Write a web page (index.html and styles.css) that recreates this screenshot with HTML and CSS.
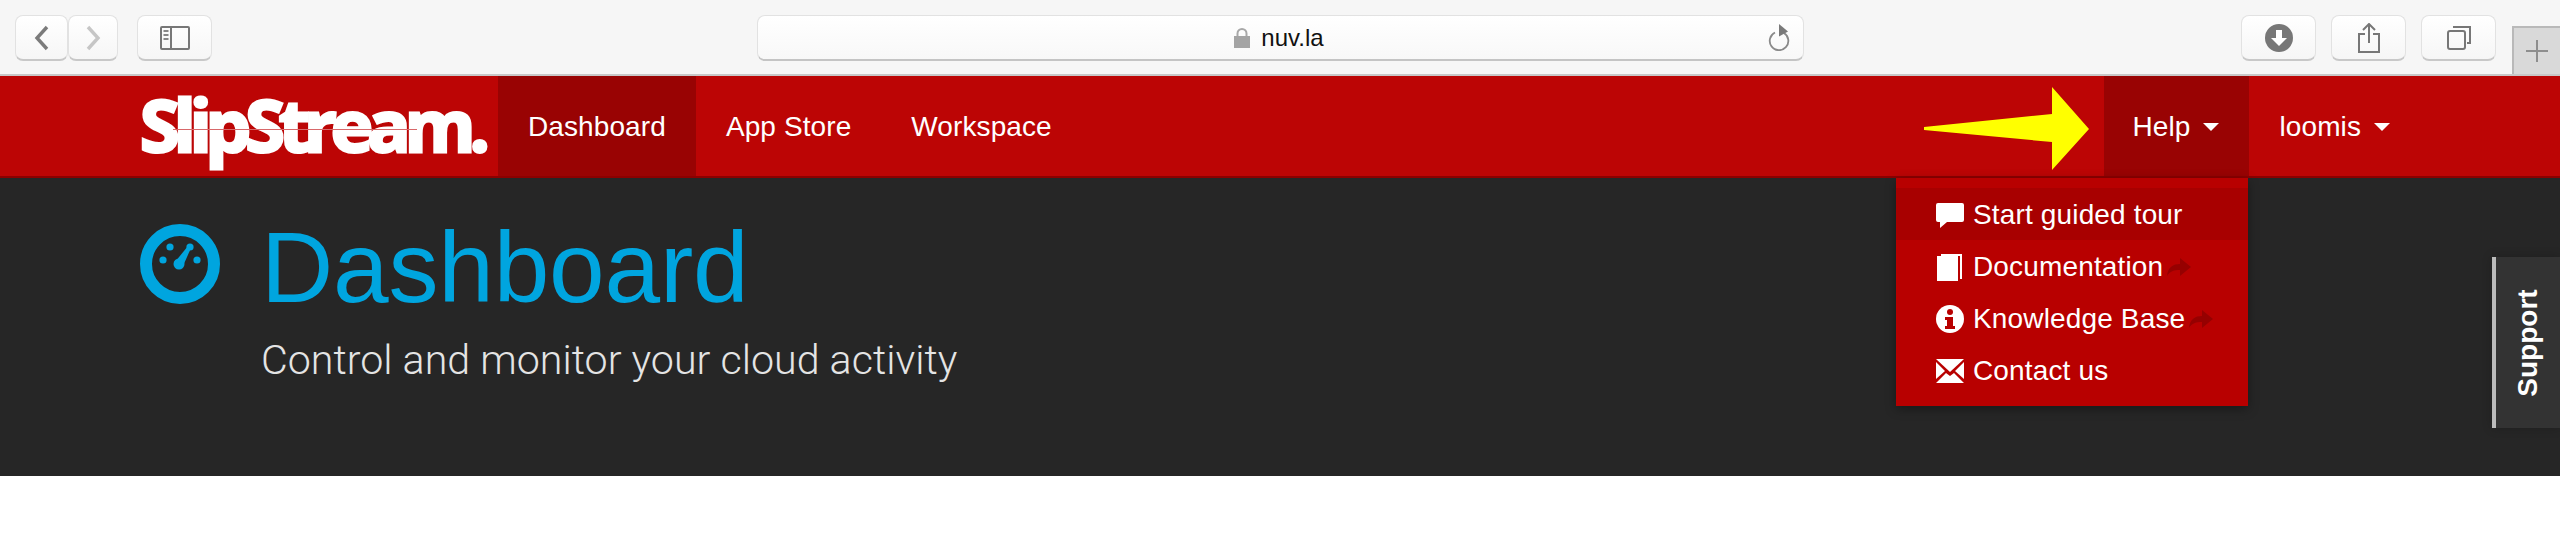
FILE: index.html
```html
<!DOCTYPE html>
<html lang="en">
<head>
  <meta charset="UTF-8">
  <title>SlipStream Dashboard</title>
  <link rel="stylesheet" href="styles.css">
</head>
<body>
  <!-- Browser toolbar -->
  <div class="toolbar">
    <div class="toolbar-left">
      <div class="tool tool-back">
        <svg width="16" height="26" viewBox="0 0 16 26"><path d="M13 2 3 13l10 11" fill="none" stroke="#7b7b7b" stroke-width="3.4"/></svg>
      </div>
      <div class="tool tool-forward">
        <svg width="16" height="26" viewBox="0 0 16 26"><path d="M3 2l10 11L3 24" fill="none" stroke="#c6c6c6" stroke-width="3.4"/></svg>
      </div>
      <div class="tool tool-sidebar">
        <svg width="30" height="24" viewBox="0 0 30 24"><rect x="1" y="1" width="28" height="22" rx="1" fill="none" stroke="#777" stroke-width="2"/><path d="M11 1v22" stroke="#777" stroke-width="2"/><path d="M3.500 5h5M3.500 9h5M3.500 13h5" stroke="#888" stroke-width="2"/></svg>
      </div>
    </div>
    <div class="urlbar">
      <svg class="lock" width="16" height="20" viewBox="0 0 16 20"><path d="M3.500 9V5.500a4.500 4.500 0 0 1 9 0V9" fill="none" stroke="#a8a8a8" stroke-width="2"/><rect y="8" width="16" height="12" fill="#a4a4a4"/></svg>
      <span class="url">nuv.la</span>
      <svg class="reload" width="22" height="27" viewBox="0 0 22 27"><path d="M7 8.500a9.300 9.300 0 1 0 9 .5" fill="none" stroke="#8a8a8a" stroke-width="1.800"/><path d="M11 0l9 7.500-9 5z" fill="#7a7a7a"/></svg>
    </div>
    <div class="toolbar-right">
      <div class="tool tool-wide">
        <svg width="28" height="28" viewBox="0 0 28 28"><circle cx="14" cy="14" r="14" fill="#777"/><path d="M11 6h6v8h5l-8 8-8-8h5z" fill="#fff"/></svg>
      </div>
      <div class="tool tool-wide">
        <svg width="22" height="30" viewBox="0 0 22 30"><path d="M7 11H1v18h20V11h-6" fill="none" stroke="#777" stroke-width="2"/><path d="M11 20V2M5 7l6-6 6 6" fill="none" stroke="#777" stroke-width="2"/></svg>
      </div>
      <div class="tool tool-wide">
        <svg width="24" height="24" viewBox="0 0 24 24"><rect x="1" y="5" width="17" height="18" rx="2" fill="none" stroke="#777" stroke-width="2"/><path d="M6 1h17v16h-3" fill="none" stroke="#777" stroke-width="2"/></svg>
      </div>
    </div>
    <div class="new-tab">
      <svg width="22" height="22" viewBox="0 0 22 22"><path d="M11 0v22M0 11h22" stroke="#8e8e8e" stroke-width="2"/></svg>
    </div>
  </div>

  <!-- Main navigation -->
  <nav class="navbar">
    <a class="logo">SlipStream.<span class="logo-line"></span></a>
    <a class="nav-item active">Dashboard</a>
    <a class="nav-item">App Store</a>
    <a class="nav-item">Workspace</a>
    <div class="nav-spacer"></div>
    <a class="nav-item active nav-help">Help <span class="caret"></span></a>
    <a class="nav-item">loomis <span class="caret"></span></a>
  </nav>

  <!-- Page header -->
  <header class="page-header">
    <svg class="header-icon" width="80" height="80" viewBox="0 0 80 80">
      <ellipse cx="40" cy="40" rx="34" ry="34" fill="none" stroke="#00a5df" stroke-width="12"/>
      <circle cx="30" cy="23" r="3.600" fill="#00a5df"/>
      <circle cx="23" cy="36" r="3.600" fill="#00a5df"/>
      <circle cx="57" cy="36" r="3.600" fill="#00a5df"/>
      <circle cx="50" cy="23" r="3.600" fill="#00a5df"/>
      <circle cx="39" cy="40" r="5.500" fill="#00a5df"/>
      <path d="M35 38 48 22l3 2-8 18z" fill="#00a5df"/>
    </svg>
    <div class="header-text">
      <h1>Dashboard</h1>
      <p>Control and monitor your cloud activity</p>
    </div>
  </header>

  <!-- Help menu, open -->
  <ul class="dropdown">
    <li class="highlight">
      <svg width="28" height="25" viewBox="0 0 28 25"><path d="M2 0h24a2 2 0 0 1 2 2v15a2 2 0 0 1-2 2H11l-7 6v-6H2a2 2 0 0 1-2-2V2a2 2 0 0 1 2-2z" fill="#fff"/></svg>
      Start guided tour
    </li>
    <li>
      <svg width="28" height="28" viewBox="0 0 28 28"><path d="M1 3h21v25H1z" fill="#fff"/><path d="M5 1h21v25h-2V3H5z" fill="#fff"/></svg>
      Documentation
      <svg class="link-arrow" width="24" height="18" viewBox="0 0 24 18"><path d="M0 18C1 9 6 6 13 6V0l11 9-11 9v-6C7 12 3 13 0 18z" fill="#960000"/></svg>
    </li>
    <li>
      <svg width="28" height="28" viewBox="0 0 28 28"><circle cx="14" cy="14" r="14" fill="#fff"/><circle cx="14" cy="7" r="3" fill="#b80000"/><path d="M9 12h8v9h2v3H9v-3h2v-6H9z" fill="#b80000"/></svg>
      Knowledge Base
      <svg class="link-arrow" width="24" height="18" viewBox="0 0 24 18"><path d="M0 18C1 9 6 6 13 6V0l11 9-11 9v-6C7 12 3 13 0 18z" fill="#960000"/></svg>
    </li>
    <li>
      <svg width="28" height="24" viewBox="0 0 28 24"><path d="M0 0h28L14 13z" fill="#fff"/><path d="M0 3l9 9-9 8zM28 3l-9 9 9 8z" fill="#fff"/><path d="M0 24l10-10 4 3 4-3 10 10z" fill="#fff"/></svg>
      Contact us
    </li>
  </ul>

  <!-- Yellow annotation arrow -->
  <svg class="annotation" width="170" height="90" viewBox="0 0 170 90">
    <path d="M1 41 129 28V1l37 42-37 41V56L1 44z" fill="#ffff00"/>
  </svg>

  <div class="support"><span>Support</span></div>
</body>
</html>
```

FILE: styles.css
```css
body {
  margin: 0;
  font-family: "Liberation Sans", Arial, sans-serif;
  background-color: #fff;
  color: #fff;
}

/* Browser toolbar */
.toolbar {
  display: flex;
  height: 74px;
  padding: 15px 0 0 15px;
  box-sizing: border-box;
  background-color: #f6f6f6;
  position: relative;
  box-shadow: 0 2px 0 #c8c8c8;
  z-index: 1;
}

.toolbar-left {
  display: flex;
  width: 197px;
}

.tool {
  display: flex;
  align-items: center;
  justify-content: center;
  height: 46px;
  box-sizing: border-box;
  background: linear-gradient(#fff, #f6f6f6);
  border: 1px solid #e2e2e2;
  border-bottom: 2px solid #c8c8c8;
  border-radius: 8px;
}

.tool-back {
  width: 53px;
}

.tool-forward {
  width: 50px;
}

.tool-sidebar {
  width: 75px;
  margin-left: 19px;
}

.urlbar {
  display: flex;
  align-items: center;
  justify-content: center;
  width: 1047px;
  height: 46px;
  margin-left: 545px;
  padding-right: 3px;
  box-sizing: border-box;
  gap: 11px;
  position: relative;
  background: linear-gradient(#fff, #f8f8f8);
  border: 1px solid #e2e2e2;
  border-bottom: 2px solid #c4c4c4;
  border-radius: 8px;
  color: #111;
  font-size: 24px;
}

.reload {
  position: absolute;
  right: 13px;
  top: 8px;
}

.toolbar-right {
  display: flex;
  gap: 15px;
  margin-left: 437px;
}

.tool-wide {
  width: 75px;
}

.new-tab {
  display: flex;
  align-items: center;
  justify-content: center;
  position: absolute;
  right: 0;
  bottom: 0;
  width: 48px;
  height: 48px;
  box-sizing: border-box;
  background-color: #d9d9d9;
  border-top: 2px solid #b9b9b9;
  border-left: 2px solid #b9b9b9;
}

/* Main navigation */
.navbar {
  display: flex;
  height: 102px;
  margin-top: 2px;
  padding: 0 140px;
  box-sizing: border-box;
  background-color: #bc0505;
  border-bottom: 2px solid #8c0000;
  font-size: 28px;
}

.nav-item {
  display: flex;
  align-items: center;
  padding: 2px 30px 0;
  height: 100px;
  box-sizing: border-box;
  gap: 13px;
  letter-spacing: 0.1px;
}

.nav-item.active {
  background-color: #990303;
}

.nav-item.nav-help {
  padding-left: 28px;
}

.nav-spacer {
  flex: 1;
}

.caret {
  width: 0;
  height: 0;
  border-top: 8px solid #fff;
  border-left: 8px solid transparent;
  border-right: 8px solid transparent;
}

.logo {
  position: relative;
  width: 358px;
  font-family: "Open Sans", sans-serif;
  font-weight: 700;
  font-size: 72px;
  letter-spacing: -6px;
  line-height: 96px;
  -webkit-text-stroke: 3px #fff;
}

.logo-line {
  position: absolute;
  left: 33px;
  top: 53px;
  width: 244px;
  height: 1px;
  background-color: #d8686a;
}

/* Page header */
.page-header {
  display: flex;
  height: 298px;
  padding: 34px 0 0 140px;
  box-sizing: border-box;
  background-color: #262626;
}

.header-icon {
  margin-top: 12px;
  margin-right: 41px;
}

.header-text h1 {
  margin: 0;
  font-size: 100px;
  font-weight: normal;
  line-height: 110px;
  letter-spacing: -0.2px;
  color: #00a5df;
}

.header-text p {
  margin: 13px 0 0;
  font-family: Roboto, sans-serif;
  font-weight: 300;
  font-size: 41.2px;
  line-height: 50px;
  color: #e4e4e4;
}

/* Help menu */
.dropdown {
  position: absolute;
  left: 1896px;
  top: 178px;
  width: 352px;
  height: 228px;
  margin: 0;
  padding: 10px 0;
  box-sizing: border-box;
  list-style: none;
  background-color: #b80000;
  box-shadow: 0 3px 10px rgba(0, 0, 0, 0.35);
  font-size: 28px;
  letter-spacing: 0.15px;
}

.dropdown li {
  display: flex;
  align-items: center;
  height: 52px;
  padding: 2px 0 0 40px;
  box-sizing: border-box;
  gap: 9px;
}

.dropdown li.highlight {
  background-color: #a80000;
}

.link-arrow {
  margin-left: -5px;
}

.annotation {
  position: absolute;
  left: 1923px;
  top: 86px;
}

/* Support tab */
.support {
  display: flex;
  align-items: center;
  justify-content: center;
  position: absolute;
  right: 0;
  top: 257px;
  width: 68px;
  height: 171px;
  box-sizing: border-box;
  background-color: #333;
  border-left: 4px solid #bbb;
  box-shadow: 0 0 10px rgba(0, 0, 0, 0.2);
}

.support span {
  transform: rotate(-90deg);
  font-size: 28px;
  font-weight: bold;
}
```
